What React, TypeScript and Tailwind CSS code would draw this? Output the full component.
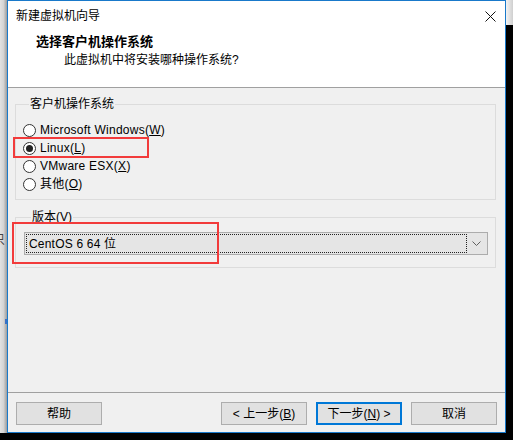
import React from "react";

const font = "font-['Liberation_Sans','Noto_Sans_CJK_SC',sans-serif]";

function Radio({ checked, children }: { checked?: boolean; children: React.ReactNode }) {
  return (
    <div className="flex h-[18px] items-center">
      <span className="flex h-[13px] w-[13px] items-center justify-center rounded-full border border-[#333] bg-white">
        {checked && <span className="h-[7px] w-[7px] rounded-full bg-[#222]" />}
      </span>
      <span className="ml-[4px] text-[12px] leading-[18px] tracking-[0.25px] text-black">{children}</span>
    </div>
  );
}

function Btn({ children, focused }: { children: React.ReactNode; focused?: boolean }) {
  return (
    <button
      type="button"
      className={
        focused
          ? "flex h-[23px] w-[86px] items-center justify-center border-2 border-[#0078d7] bg-[#e1e1e1] text-[12px] text-black"
          : "flex h-[23px] w-[86px] items-center justify-center border border-[#adadad] bg-[#e1e1e1] text-[12px] text-black"
      }
    >
      {children}
    </button>
  );
}

export default function App() {
  return (
    <div className={`relative flex h-[440px] w-[513px] flex-col overflow-hidden bg-black ${font}`}>
      <div className="flex h-[433px]">
        {/* desktop left of the dialog */}
        <div className="flex w-[7px] flex-col overflow-hidden bg-gradient-to-r from-[#e2e2e2] via-[#d4d4d4] to-[#9c9c9c]">
          <div className="h-[233px]" />
          <span className="-ml-[7px] text-[12px] leading-[14px] text-[#444]">只</span>
          <div className="h-[72px]" />
          <div className="ml-[5px] h-[5px] w-[2px] bg-[#3a6fc4]" />
        </div>

        {/* dialog window */}
        <div className="flex w-[499px] flex-col border border-[#1979ca] bg-[#f0f0f0]">
          <div className="h-[86px] bg-white">
            <div className="flex h-[29px] items-center justify-between pl-[8px] pr-[9px]">
              <span className="text-[12px] text-black">新建虚拟机向导</span>
              <svg width="11" height="11" viewBox="0 0 11 11" className="mt-[1px]">
                <path d="M0.5 0.5L10.5 10.5M10.5 0.5L0.5 10.5" stroke="#111" strokeWidth="1" />
              </svg>
            </div>
            <div className="pl-[28px] pt-[3px] text-[13px] font-bold leading-[18px] text-black">选择客户机操作系统</div>
            <div className="pl-[56px] text-[12px] leading-[18px] text-black">此虚拟机中将安装哪种操作系统?</div>
          </div>
          <div className="h-px bg-[#a0a0a0]" />

          <div className="flex-1 pl-[7px] pt-[8px]">
            <fieldset className="w-[481px] border border-[#dcdcdc] pb-[6px] pl-[7px] pt-[9px]">
              <legend className="ml-[6px] px-[1px] text-[12px] leading-[16px] text-black">客户机操作系统</legend>
              <Radio>
                Microsoft Windows(<u>W</u>)
              </Radio>
              <Radio checked>
                Linux(<u>L</u>)
              </Radio>
              <Radio>
                VMware ESX(<u>X</u>)
              </Radio>
              <Radio>
                其他(<u>O</u>)
              </Radio>
            </fieldset>

            <fieldset className="mt-[9px] w-[481px] border border-[#dcdcdc] pb-[12px] pl-[8px] pt-[7px]">
              <legend className="ml-[7px] px-[1px] text-[12px] leading-[16px] text-black">版本(V)</legend>
              <div className="flex h-[23px] w-[464px] items-stretch border border-[#acacac] bg-[#e5e5e5] p-[1px]">
                <div className="flex flex-1 items-center border border-dotted border-[#222] pl-[2px] text-[12px] tracking-[0.2px] text-black">
                  CentOS 6 64 位
                </div>
                <div className="flex w-[19px] items-center justify-center">
                  <svg width="9" height="5" viewBox="0 0 9 5">
                    <path d="M0.5 0.5L4.5 4.5L8.5 0.5" stroke="#606060" fill="none" strokeWidth="1" />
                  </svg>
                </div>
              </div>
            </fieldset>
          </div>

          <div className="h-px bg-[#a0a0a0]" />
          <div className="flex h-[39px] items-start justify-between px-[8px] pt-[9px]">
            <Btn>帮助</Btn>
            <div className="flex gap-[9px]">
              <Btn>
                &lt; 上一步(<u>B</u>)
              </Btn>
              <Btn focused>
                下一步(<u>N</u>) &gt;
              </Btn>
              <Btn>取消</Btn>
            </div>
          </div>
        </div>

        {/* right of the dialog */}
        <div className="flex w-[7px] flex-col">
          <div className="h-[25px] bg-gradient-to-r from-[#f4f4f4] to-[#cfcfcf]" />
          <div className="flex-1 bg-black" />
        </div>
      </div>

      {/* red annotation boxes */}
      <div className="absolute left-[13px] top-[137px] h-[21px] w-[136px] border-2 border-[#f23b3b]" />
      <div className="absolute left-[12px] top-[222px] h-[42px] w-[207px] border-2 border-[#f23b3b]" />
    </div>
  );
}
